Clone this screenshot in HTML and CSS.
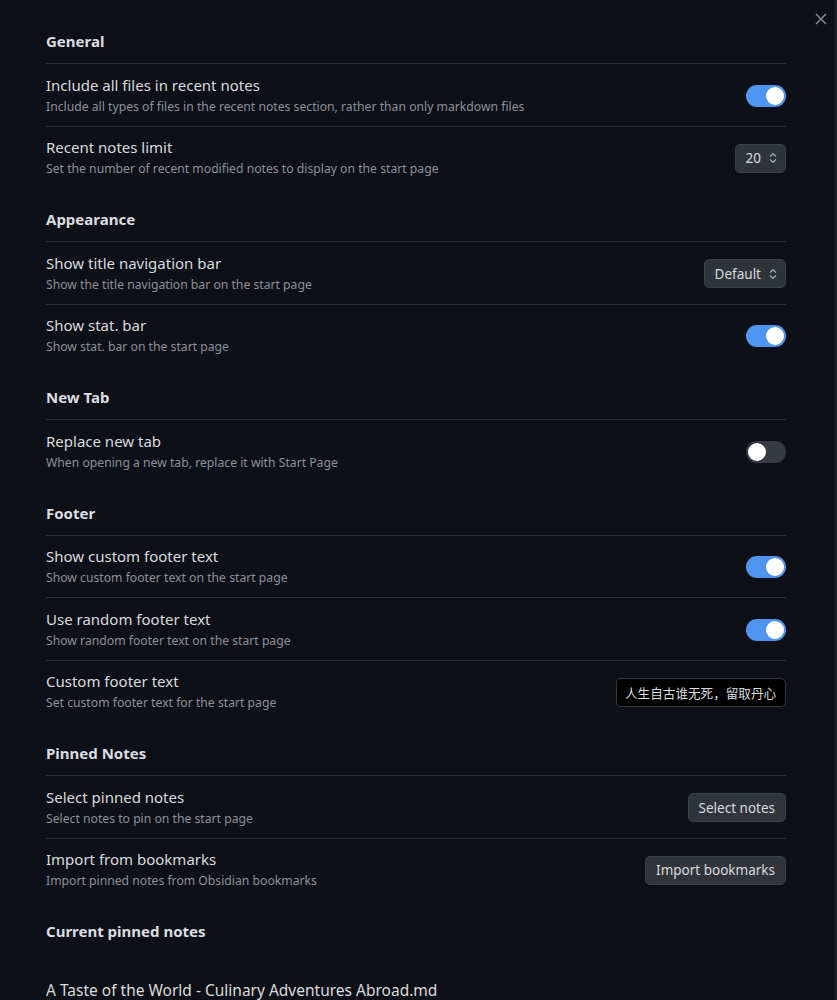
FILE: index.html
```html
<!DOCTYPE html>
<html lang="en">
<head>
<meta charset="utf-8">
<title>Start Page Settings</title>
<link rel="stylesheet" href="styles.css">
</head>
<body>
<div class="modal">
  <button class="close" aria-label="Close">
    <svg width="12" height="12" viewBox="0 0 12 12"><path d="M1 1L11 11M11 1L1 11" stroke="currentColor" stroke-width="1.4" fill="none"/></svg>
  </button>
  <div class="content">
    <div class="heading">General</div>
    <div class="item">
      <div class="info"><div class="name">Include all files in recent notes</div><div class="desc">Include all types of files in the recent notes section, rather than only markdown files</div></div>
      <div class="control"><div class="toggle on"></div></div>
    </div>
    <div class="item">
      <div class="info"><div class="name">Recent notes limit</div><div class="desc">Set the number of recent modified notes to display on the start page</div></div>
      <div class="control"><div class="select">20<svg class="chev" width="10" height="12" viewBox="0 0 10 12"><path d="M2 4.5L5 1.5L8 4.5M2 7.5L5 10.5L8 7.5" stroke="currentColor" stroke-width="1.2" fill="none"/></svg></div></div>
    </div>

    <div class="heading">Appearance</div>
    <div class="item">
      <div class="info"><div class="name">Show title navigation bar</div><div class="desc">Show the title navigation bar on the start page</div></div>
      <div class="control"><div class="select">Default<svg class="chev" width="10" height="12" viewBox="0 0 10 12"><path d="M2 4.5L5 1.5L8 4.5M2 7.5L5 10.5L8 7.5" stroke="currentColor" stroke-width="1.2" fill="none"/></svg></div></div>
    </div>
    <div class="item">
      <div class="info"><div class="name">Show stat. bar</div><div class="desc">Show stat. bar on the start page</div></div>
      <div class="control"><div class="toggle on"></div></div>
    </div>

    <div class="heading">New Tab</div>
    <div class="item">
      <div class="info"><div class="name">Replace new tab</div><div class="desc">When opening a new tab, replace it with Start Page</div></div>
      <div class="control"><div class="toggle"></div></div>
    </div>

    <div class="heading">Footer</div>
    <div class="item">
      <div class="info"><div class="name">Show custom footer text</div><div class="desc">Show custom footer text on the start page</div></div>
      <div class="control"><div class="toggle on"></div></div>
    </div>
    <div class="item">
      <div class="info"><div class="name">Use random footer text</div><div class="desc">Show random footer text on the start page</div></div>
      <div class="control"><div class="toggle on"></div></div>
    </div>
    <div class="item">
      <div class="info"><div class="name">Custom footer text</div><div class="desc">Set custom footer text for the start page</div></div>
      <div class="control"><div class="textbox">人生自古谁无死，留取丹心</div></div>
    </div>

    <div class="heading">Pinned Notes</div>
    <div class="item">
      <div class="info"><div class="name">Select pinned notes</div><div class="desc">Select notes to pin on the start page</div></div>
      <div class="control"><button class="btn">Select notes</button></div>
    </div>
    <div class="item">
      <div class="info"><div class="name">Import from bookmarks</div><div class="desc">Import pinned notes from Obsidian bookmarks</div></div>
      <div class="control"><button class="btn">Import bookmarks</button></div>
    </div>

    <div class="heading plain">Current pinned notes</div>
    <div class="pinned">A Taste of the World - Culinary Adventures Abroad.md</div>
  </div>
</div>
</body>
</html>
```

FILE: styles.css
```css
* { box-sizing: border-box; }
html, body { margin: 0; height: 100%; }
body {
  background: #0d1017;
  color: #dadbdd;
  font-family: "Noto Sans", "Noto Sans CJK SC", sans-serif;
  overflow: hidden;
}
.modal {
  position: relative;
  height: 1000px;
  border-right: 2px solid #1b1e25;
}
.close {
  position: absolute;
  top: 13px;
  right: 8px;
  background: none;
  border: 0;
  padding: 0;
  color: #8b9099;
  width: 12px;
  height: 12px;
  display: flex;
}
.content {
  padding: 10px 49px 0 46px;
}
.heading {
  font-weight: 700;
  font-size: 15px;
  line-height: 20px;
  padding: 21px 0 12px;
  color: #dcdde0;
}
.heading.plain { padding-bottom: 0; }
.item {
  display: flex;
  align-items: center;
  border-top: 1px solid #2c2f36;
  padding: 10.5px 0 9px;
  gap: 20px;
}
.info { flex: 1; min-width: 0; }
.name {
  font-size: 15px;
  line-height: 20px;
  color: #dadbdd;
}
.desc {
  margin-top: 2px;
  font-size: 12.2px;
  line-height: 20px;
  color: #8c9098;
}
.control { display: flex; align-items: center; }
.toggle {
  width: 40px;
  height: 22px;
  border-radius: 11px;
  background: #363a42;
  position: relative;
}
.toggle::after {
  content: "";
  position: absolute;
  top: 2px;
  left: 2px;
  width: 18px;
  height: 18px;
  border-radius: 50%;
  background: #ffffff;
}
.toggle.on { background: #4f95ef; }
.toggle.on::after { left: 20px; }
.select {
  display: flex;
  align-items: center;
  gap: 7px;
  height: 29px;
  padding: 0 7px 0 10px;
  background: #2f333a;
  border: 1px solid #3b3f47;
  border-radius: 5px;
  font-size: 13.5px;
  color: #dadbdd;
}
.chev { color: #a9adb4; }
.textbox {
  width: 170px;
  height: 29px;
  background: #000000;
  border: 1px solid #33363d;
  border-radius: 5px;
  padding: 0 8px;
  overflow: hidden;
  white-space: nowrap;
  display: flex;
  align-items: center;
  font-size: 12.6px;
  color: #dadbdd;
}
.btn {
  height: 29px;
  padding: 0 10px;
  background: #30343b;
  border: 1px solid #3b3f47;
  border-radius: 5px;
  font-family: inherit;
  font-size: 13.5px;
  color: #dadbdd;
}
.pinned {
  margin-top: 38px;
  font-size: 15.5px;
  line-height: 22px;
  color: #dadbdd;
}
```
